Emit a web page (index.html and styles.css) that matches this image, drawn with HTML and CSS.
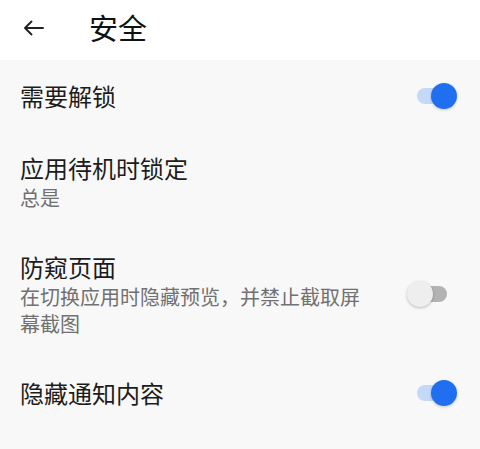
FILE: index.html
```html
<!DOCTYPE html>
<html lang="zh-CN">
<head>
<meta charset="utf-8">
<title>安全</title>
<link rel="stylesheet" href="styles.css">
</head>
<body>
<header class="appbar">
  <span class="back">
    <svg width="21" height="16" viewBox="0 0 21 16" aria-hidden="true">
      <path d="M20 8H2M8.5 1.5L2 8l6.5 6.5" fill="none" stroke="#222" stroke-width="1.9" stroke-linecap="round" stroke-linejoin="round"/>
    </svg>
  </span>
  <h1 class="title">安全</h1>
</header>
<main class="list">
  <div class="row">
    <div class="text"><div class="label">需要解锁</div></div>
    <span class="toggle on"><span class="track"></span><span class="thumb"></span></span>
  </div>
  <div class="row">
    <div class="text">
      <div class="label">应用待机时锁定</div>
      <div class="sub">总是</div>
    </div>
  </div>
  <div class="row">
    <div class="text narrow">
      <div class="label">防窥页面</div>
      <div class="sub">在切换应用时隐藏预览，并禁止截取屏幕截图</div>
    </div>
    <span class="toggle off"><span class="track"></span><span class="thumb"></span></span>
  </div>
  <div class="row">
    <div class="text"><div class="label">隐藏通知内容</div></div>
    <span class="toggle on"><span class="track"></span><span class="thumb"></span></span>
  </div>
</main>
</body>
</html>
```
FILE: styles.css
```css
html, body {
  margin: 0;
  padding: 0;
}
body {
  width: 480px;
  height: 449px;
  overflow: hidden;
  background: #f8f8f8;
  font-family: "Noto Sans CJK SC", "Noto Sans", sans-serif;
  color: #1c1c1c;
}
.appbar {
  height: 60px;
  background: #ffffff;
  display: flex;
  align-items: center;
  padding-left: 23px;
}
.back {
  display: flex;
  width: 21px;
  height: 16px;
  margin-top: -5px;
}
.title {
  margin: -6px 0 0 45px;
  font-size: 29px;
  font-weight: 400;
  line-height: 34px;
  color: #111;
}
.list {
  display: flex;
  flex-direction: column;
}
.row {
  display: flex;
  align-items: center;
  padding: 20px 23px 20px 20px;
}
.text {
  flex: 1;
}
.text.narrow {
  flex: 0 0 352px;
  margin-right: auto;
}
.label {
  font-size: 24px;
  line-height: 32px;
  color: #1c1c1c;
}
.sub {
  font-size: 20px;
  line-height: 27px;
  color: #717171;
}
.toggle {
  position: relative;
  width: 50px;
  height: 26px;
  flex: none;
}
.toggle .track {
  position: absolute;
  top: 5px;
  height: 16px;
  width: 36px;
  border-radius: 8px;
}
.toggle .thumb {
  position: absolute;
  top: 0;
  width: 26px;
  height: 26px;
  border-radius: 50%;
}
.toggle.on .track {
  left: 10px;
  background: #c4d8f8;
}
.toggle.on .thumb {
  right: 0;
  background: #1f6ff0;
  box-shadow: 0 1px 3px rgba(0, 0, 0, 0.2);
}
.toggle.off .track {
  left: 4px;
  background: #b3b3b3;
}
.toggle.off .thumb {
  left: 0;
  background: #eeeeee;
  box-shadow: 0 1px 3px rgba(0, 0, 0, 0.25);
}
```
